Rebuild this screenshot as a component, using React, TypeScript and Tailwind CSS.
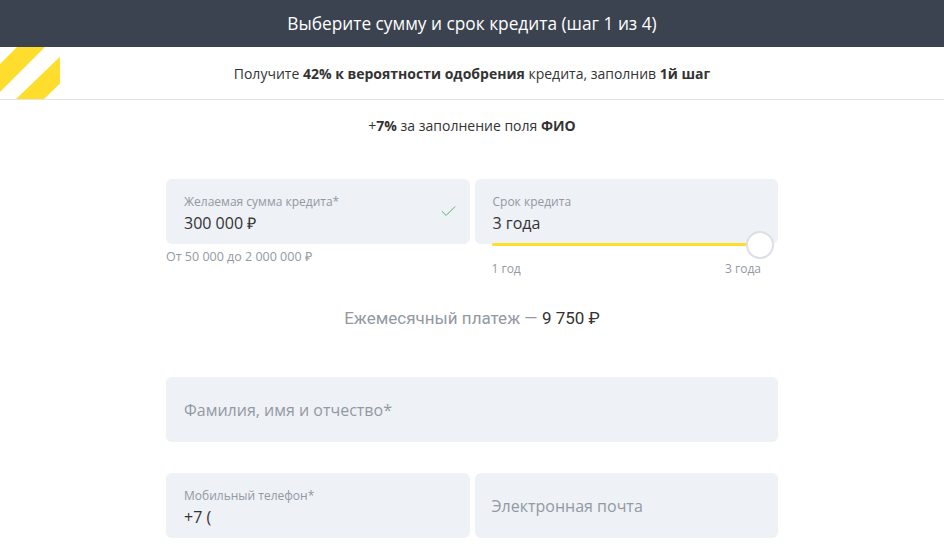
import { Check } from "lucide-react";

function Stripes() {
  return (
    <svg width="60" height="52" viewBox="0 0 60 52" className="absolute left-0 top-0">
      <defs>
        <clipPath id="stripe-clip">
          <polygon points="0,0 46,0 60,10 60,52 0,52" />
        </clipPath>
      </defs>
      <g clipPath="url(#stripe-clip)" fill="#ffdd2d">
        <polygon points="17,0 45,0 -7,52 -35,52" />
        <polygon points="70,0 98,0 44,52 16,52" />
      </g>
    </svg>
  );
}

function Field({ label, value }: { label: string; value: string }) {
  return (
    <div className="h-[65px] rounded-md bg-[#eef1f6] px-[18px] pt-[15px]">
      <div className="text-[12px] leading-[16px] text-[#9299a2]">{label}</div>
      <div className="mt-[2px] text-[16px] leading-[22px] text-[#333]">{value}</div>
    </div>
  );
}

export default function App() {
  return (
    <div className="min-h-[553px] bg-white font-['Open_Sans',sans-serif] text-[#333]">
      <div className="flex h-[47px] items-center justify-center bg-[#3c4350] text-[17.3px] text-white">
        Выберите сумму и срок кредита (шаг 1 из 4)
      </div>

      <div className="relative flex h-[53px] items-center justify-center border-b border-[#e3e3e3] text-[14px] text-[#333]">
        <Stripes />
        <span>
          Получите <b>42% к вероятности одобрения</b> кредита, заполнив <b>1й шаг</b>
        </span>
      </div>

      <div className="mt-[16px] text-center text-[14px] leading-[20px]">
        +<b>7%</b> за заполнение поля <b>ФИО</b>
      </div>

      <div className="mx-auto mt-[43px] w-[612px]">
        <div className="grid grid-cols-2 gap-[5px]">
          <div>
            <div className="relative">
              <Field label="Желаемая сумма кредита*" value="300 000 ₽" />
              <Check className="absolute right-[12px] top-[23px] text-[#49b36f]" size={19} strokeWidth={1.2} />
            </div>
            <div className="mt-[5px] text-[12.5px] leading-[16px] text-[#9299a2]">От 50 000 до 2 000 000 ₽</div>
          </div>
          <div>
            <div className="relative">
              <Field label="Срок кредита" value="3 года" />
              <div className="absolute bottom-[-2px] left-[17px] right-[17px] h-[3px] rounded-full bg-[#ffdd2d]" />
              <div className="absolute bottom-[-15px] right-[4px] h-[28px] w-[28px] rounded-full border-2 border-[#dcdfe3] bg-white" />
            </div>
            <div className="mt-[17px] flex justify-between px-[17px] text-[12px] leading-[16px] text-[#9299a2]">
              <span>1 год</span>
              <span>3 года</span>
            </div>
          </div>
        </div>

        <div className="mt-[30px] text-center font-['Roboto',sans-serif] text-[17px] leading-[22px] text-[#9299a2]">
          Ежемесячный платеж — <span className="text-[#333]">9 750 ₽</span>
        </div>

        <div className="mt-[48px] flex h-[65px] items-center rounded-md bg-[#eef1f6] px-[18px] text-[16px] text-[#9299a2]">
          Фамилия, имя и отчество*
        </div>

        <div className="mt-[31px] grid grid-cols-2 gap-[5px]">
          <Field label="Мобильный телефон*" value="+7 (" />
          <div className="flex h-[65px] items-center rounded-md bg-[#eef1f6] px-[17px] text-[16px] text-[#9299a2]">
            Электронная почта
          </div>
        </div>
      </div>
    </div>
  );
}
